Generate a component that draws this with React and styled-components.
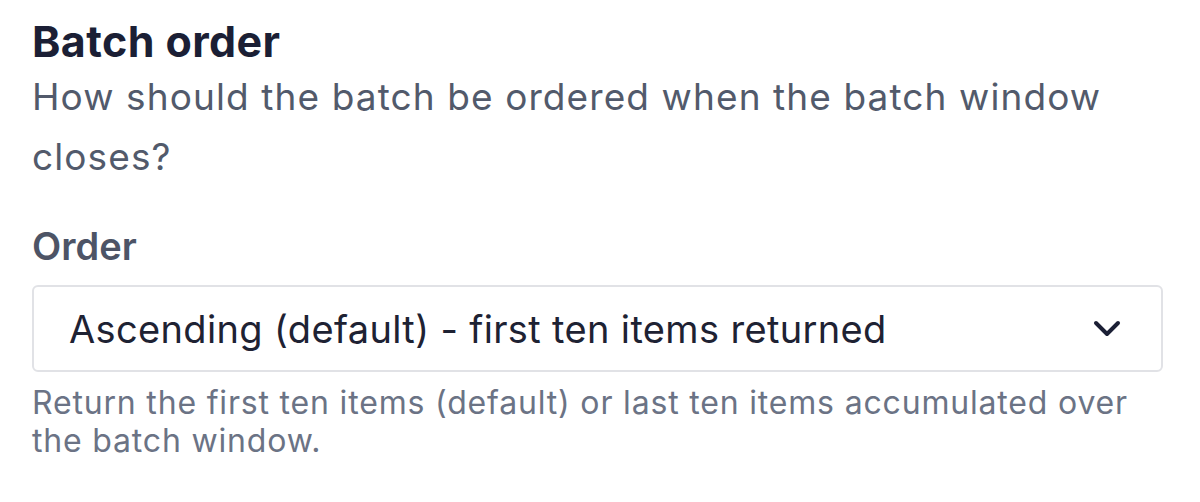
import React from "react";
import styled, { createGlobalStyle } from "styled-components";

const Global = createGlobalStyle`
  html, body { margin: 0; padding: 0; background: #ffffff; }
  body {
    font-family: Inter, "Noto Sans", sans-serif;
    font-variation-settings: "opsz" 14;
    -webkit-font-smoothing: antialiased;
  }
`;

const Section = styled.section`
  box-sizing: border-box;
  width: 1200px;
  height: 502px;
  padding: 15px 37px 0 32px;
  display: flex;
  flex-direction: column;
`;

const Title = styled.h2`
  margin: 0;
  font-size: 43px;
  line-height: 52px;
  font-weight: 700;
  color: #1b1f35;
  letter-spacing: 0.4px;
`;

const Description = styled.p`
  margin: 0;
  font-size: 37px;
  line-height: 60px;
  font-weight: 400;
  color: #525a6b;
  letter-spacing: 1.1px;
`;

const Field = styled.div`
  display: flex;
  flex-direction: column;
  margin-top: 35px;
`;

const Label = styled.label`
  font-size: 38px;
  line-height: 48px;
  font-weight: 600;
  color: #4d5466;
`;

const SelectBox = styled.div`
  box-sizing: border-box;
  margin-top: 15px;
  height: 87px;
  display: flex;
  align-items: center;
  justify-content: space-between;
  padding: 0 40px 0 35px;
  border: 2px solid #e1e2e6;
  border-radius: 6px;
  background: #fff;
`;

const SelectValue = styled.span`
  font-size: 38px;
  font-weight: 400;
  color: #1e2233;
  letter-spacing: 0.35px;
`;

const Help = styled.p`
  margin: 12px 0 0;
  font-size: 32px;
  line-height: 38px;
  color: #6b7385;
  letter-spacing: 0.82px;
`;

const Chevron = () => (
  <svg width="28" height="18" viewBox="0 0 28 18" fill="none" stroke="#1b1f35" strokeWidth="4" strokeLinecap="round" strokeLinejoin="round">
    <path d="M3 3l11 11 11-11" />
  </svg>
);

export default function App() {
  return (
    <>
      <Global />
      <Section>
        <Title>Batch order</Title>
        <Description>How should the batch be ordered when the batch window closes?</Description>
        <Field>
          <Label>Order</Label>
          <SelectBox>
            <SelectValue>Ascending (default) - first ten items returned</SelectValue>
            <Chevron />
          </SelectBox>
          <Help>Return the first ten items (default) or last ten items accumulated over the batch window.</Help>
        </Field>
      </Section>
    </>
  );
}
